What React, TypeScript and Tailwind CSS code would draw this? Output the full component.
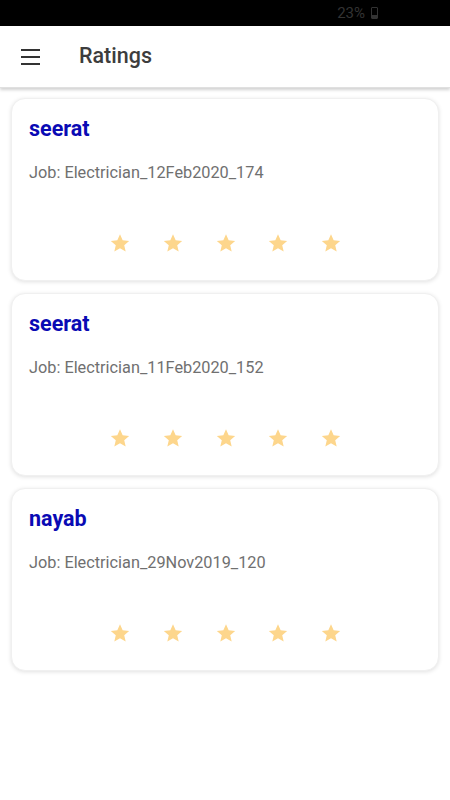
const ratings = [
  { name: 'seerat', job: 'Electrician_12Feb2020_174' },
  { name: 'seerat', job: 'Electrician_11Feb2020_152' },
  { name: 'nayab', job: 'Electrician_29Nov2019_120' },
];

const Star = () => (
  <svg width="22" height="22" viewBox="0 0 24 24" fill="#fdd68c">
    <path d="M12 2.5l2.9 6.6 7.1.6-5.4 4.7 1.6 7-6.2-3.7-6.2 3.7 1.6-7L2 9.7l7.1-.6z" />
  </svg>
);

const RatingCard = ({ name, job }: { name: string; job: string }) => (
  <div className="h-[183px] bg-white rounded-[14px] shadow-[0_1px_4px_rgba(0,0,0,0.12)] border border-[#f0f0f0] px-[17px] pt-[18px] flex flex-col">
    <div className="text-[21.5px] leading-6 font-bold text-[#0a0ab4]">{name}</div>
    <div className="mt-[22px] text-[16.3px] leading-5 text-[#707070]">Job: {job}</div>
    <div className="mt-[49px] flex items-center gap-[30.75px] pl-[80px]">
      {[0, 1, 2, 3, 4].map((i) => (
        <Star key={i} />
      ))}
    </div>
  </div>
);

export default function App() {
  return (
    <div className="w-[450px] h-[800px] bg-white font-['Roboto',sans-serif] flex flex-col">
      {/* status bar */}
      <div className="h-[26px] bg-black flex items-center justify-end pr-[72px] gap-[6px]">
        <span className="text-[15px] text-[#333]">23%</span>
        <div className="w-[7px] h-[12px] border border-[#333] rounded-[1px] relative">
          <div className="absolute bottom-0 left-0 right-0 h-[3px] bg-[#333]" />
        </div>
      </div>

      {/* app bar */}
      <div className="h-[62px] bg-white flex items-center shadow-[0_2px_3px_rgba(0,0,0,0.18)] border-b border-[#e0e0e0] relative z-10">
        <div className="ml-[21px] w-[19px] flex flex-col gap-[5px]">
          <div className="h-[2px] bg-[#333]" />
          <div className="h-[2px] bg-[#333]" />
          <div className="h-[2px] bg-[#333]" />
        </div>
        <span className="ml-[39px] text-[21.5px] font-medium text-[#3d3d3d]">Ratings</span>
      </div>

      {/* list */}
      <div className="flex flex-col gap-[12px] px-[11px] pt-[10px]">
        {ratings.map((r, i) => (
          <RatingCard key={i} name={r.name} job={r.job} />
        ))}
      </div>
    </div>
  );
}
